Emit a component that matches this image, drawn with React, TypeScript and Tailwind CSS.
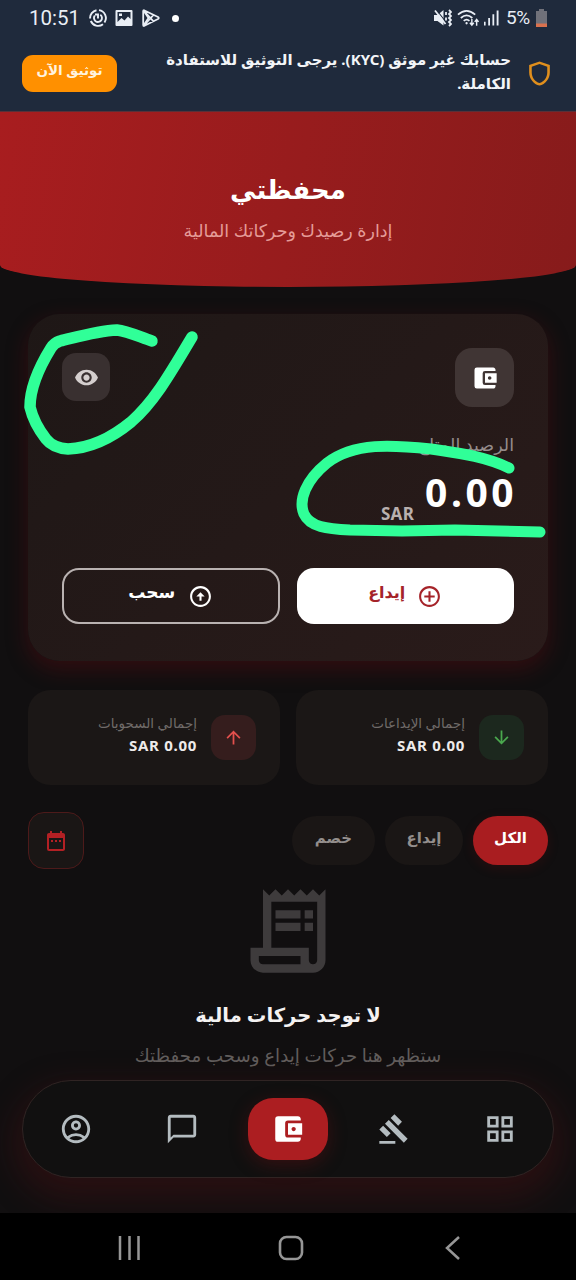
import {
  MdAccountBalanceWallet,
  MdAddCircleOutline,
  MdArrowDownward,
  MdArrowUpward,
  MdChatBubbleOutline,
  MdDateRange,
  MdGavel,
  MdGridView,
  MdOutlineAccountCircle,
  MdOutlineArrowCircleUp,
  MdOutlineReceiptLong,
  MdOutlineShield,
  MdVisibility,
} from "react-icons/md";

const StatusBar = () => (
  <div dir="ltr" className="flex h-9 items-center justify-between pl-[29px] pr-[29px] text-[#e9eef5] font-[Roboto,sans-serif]">
    <div className="flex items-center">
      <span className="w-[52px] text-[20.500px] leading-9">10:51</span>
      <svg className="ml-2 h-[18px] w-[18px]" viewBox="0 0 18 18" fill="none" stroke="currentColor" strokeWidth="1.900">
        <path d="M7.500 1.200A8 8 0 0 0 1.100 9.500M1.800 12A8 8 0 0 0 14 15.200M15.500 13.500A8 8 0 0 0 10 1.100" />
        <path d="M5.800 6.500a4 4 0 1 0 5.500-.8M9 9.500V5.500H6" />
      </svg>
      <svg className="ml-2 h-[18px] w-[18px]" viewBox="0 0 18 18">
        <path fill="currentColor" fillRule="evenodd" d="M1.500 1h15q1 0 1 1v14q0 1-1 1h-15q-1 0-1-1V2q0-1 1-1zM2.500 3v10l4-4 3 2.500 3.500-4 2.500 2.500V3zM4 4.500h3v2.500H4z" />
      </svg>
      <svg className="ml-[9px] h-[18px] w-[18px]" viewBox="0 0 18 18" fill="none" stroke="currentColor" strokeWidth="1.800" strokeLinejoin="round">
        <path d="M2 1.200 16 8q1.500 1 0 2L2 17q-.8 0-.8-1V2q0-.8.8-.8zM2 2l9.500 10.300M2 16.300 11.500 6" />
        <path d="M1.500 1.500 6.500 9l-5 7.500" />
      </svg>
      <span className="ml-3 h-[7px] w-[7px] rounded-full bg-white" />
    </div>
    <div className="flex items-center">
      <svg className="h-[18px] w-[18px]" viewBox="0 0 18 18" fill="none" stroke="currentColor" strokeWidth="1.800">
        <path fill="currentColor" stroke="none" d="M0 6h3.500l6-5v15.500l-6-4.500H0z" />
        <path stroke="#1f2a3c" strokeWidth="1.200" d="M2.500 1l9 11.500" />
        <path d="M1 1.500 11.500 15M15 1l2 2-2 2 2 2-2 2 2 2-2 2 2 2-2 2M12 3v3M12 8.500v3" />
      </svg>
      <svg className="ml-[5px] h-5 w-[23px]" viewBox="0 0 24 20" fill="none" stroke="currentColor" strokeWidth="1.800">
        <path d="M1 6.500q9-8 18 0M4 10q6-5.500 12 0M7 13q3-2.800 6 0" />
        <circle cx="10" cy="15.500" r="1.200" fill="currentColor" stroke="none" />
        <path strokeWidth="1.500" d="M15.500 11v6M13.500 15l2 2.500 2-2.500M20.500 18v-6M18.500 14l2-2.500 2 2.500" />
      </svg>
      <svg className="ml-1 h-4 w-[15px]" viewBox="0 0 16 16" fill="currentColor">
        <path d="M0 12h1.700v4H0zM4.500 8h1.900v8H4.500zM9 4h1.900v12H9zM13.500 0h2v16h-2z" />
      </svg>
      <span className="ml-[7px] w-[27px] text-[19px] leading-9 tracking-[-0.5px]">5%</span>
      <svg className="ml-[3px] h-[18px] w-[11px]" viewBox="0 0 11 18">
        <path fill="#70717a" d="M3 0h5v2h3v13H0V2h3z" />
        <path fill="#d9714e" d="M0 14.500h11V18H0z" />
      </svg>
    </div>
  </div>
);

const KycBanner = () => (
  <div className="flex h-[76px] border-b border-[#5a3038] pr-[21px] pl-[22px]">
    <MdOutlineShield className="mt-[23px] h-[29px] w-[31px] shrink-0 text-[#e08f1d]" preserveAspectRatio="none" />
    <p className="mr-[13px] mt-[11px] w-[350px] text-[15px] font-bold leading-6 text-[#f2f5f8] whitespace-nowrap">
      حسابك غير موثق (KYC). يرجى التوثيق للاستفادة
      <br />
      الكاملة.
    </p>
    <button className="mr-auto mt-[19px] h-[37px] w-[95px] shrink-0 rounded-[11px] bg-[#ff9000] pb-[6px] text-[13.500px] font-bold text-[#fff3df]">
      توثيق الآن
    </button>
  </div>
);

const WalletHeader = () => (
  <header className="flex h-[175px] flex-col items-center rounded-b-[50%_22px] bg-linear-[100deg] from-[#a81d1f] to-[#871b1b] pt-[57px]">
    <h1 className="text-[26px] font-bold leading-10 text-white">محفظتي</h1>
    <p className="mt-[7px] text-[17.500px] leading-7 text-[#e59b98]">إدارة رصيدك وحركاتك المالية</p>
  </header>
);

const BalanceCard = () => (
  <section className="relative mx-7 mt-[27px] h-[347px] rounded-[32px] bg-linear-[135deg] from-[#1e1716] to-[#2a1b1a] px-[34px] pt-[34px] shadow-[0_8px_20px_2px_rgba(100,12,16,0.35)]">
    <div className="flex justify-between">
      <div className="flex h-[59px] w-[59px] items-center justify-center rounded-[17px] bg-[#403534]">
        <MdAccountBalanceWallet className="h-7 w-7 text-white" />
      </div>
      <button className="mt-[5px] flex h-12 w-12 items-center justify-center rounded-[14px] bg-[#393030]">
        <MdVisibility className="h-[25px] w-[25px] text-[#d5cfce]" />
      </button>
    </div>
    <p className="mt-[21px] h-8 text-[17.500px] leading-8 text-[#958c8b]">الرصيد المتاح</p>
    <div dir="ltr" className="flex h-[62px] items-end justify-end gap-[11px] font-['Noto_Sans',sans-serif] font-bold">
      <span className="mb-[-4px] text-[17px] leading-6 tracking-[0.3px] text-[#b9b0af]">SAR</span>
      <span className="mr-[-3px] text-[39px] leading-[60px] tracking-[3.500px] text-white">0.00</span>
    </div>
    <div className="mt-[46px] grid grid-cols-2 gap-[17px]">
      <button className="flex h-14 items-center justify-center gap-3 rounded-[17px] bg-white text-[#a52329]">
        <MdAddCircleOutline className="h-[25px] w-[25px]" />
        <span className="mb-2 text-[16px] font-bold">إيداع</span>
      </button>
      <button className="flex h-14 items-center justify-center gap-[13px] rounded-[17px] border-2 border-[#b9b2b1] text-white">
        <MdOutlineArrowCircleUp className="h-[25px] w-[25px]" />
        <span className="mb-2 text-[17px] font-bold">سحب</span>
      </button>
    </div>

    {/* Highlighter marks drawn over the card */}
    <svg className="pointer-events-none absolute left-[-28px] top-0 h-[347px] w-[576px]" viewBox="0 314 576 347" fill="none" stroke="#30ff98" strokeLinecap="round" strokeLinejoin="round">
      <path strokeWidth="11.500" d="M152 341C142 338 128 331 117 330C97 331 77 337 60 341Q54 343 51 348C38 369 30 388 30 407C33 420 39 430 46 439Q53 448 68 449C93 448 114 436 131 422C154 402 170 374 192 337" />
      <path strokeWidth="11" d="M509 468C484 456 457 453 431 449C393 445 354 442 327 463C306 480 298 500 304 514C310 527 327 529 350 530L402 531L455 530L540 532" />
    </svg>
  </section>
);

const stats = [
  { label: "إجمالي الإيداعات", icon: MdArrowDownward, tone: "bg-[#1c281e] text-[#4aa84e]" },
  { label: "إجمالي السحوبات", icon: MdArrowUpward, tone: "bg-[#351d1d] text-[#e4504d]" },
];

const Stats = () => (
  <section className="relative mx-7 mt-[29px] grid grid-cols-2 gap-4">
    {stats.map(({ label, icon: Icon, tone }) => (
      <div key={label} className="flex h-[95px] rounded-[22px] bg-[#1b1716] pr-6 pt-[25px]">
        <div className={`flex h-[45px] w-[45px] items-center justify-center rounded-[14px] ${tone}`}>
          <Icon className="h-[21px] w-[21px]" />
        </div>
        <div className="mr-[14px]">
          <p className="mt-[-2px] h-5 text-[13.500px] leading-5 text-[#706b69] whitespace-nowrap">{label}</p>
          <p dir="ltr" className="text-right font-['Noto_Sans',sans-serif] text-[15px] font-bold leading-6 tracking-[0.7px] text-[#eeebea]">SAR 0.00</p>
        </div>
      </div>
    ))}
  </section>
);

const Filters = () => (
  <section className="mx-7 mt-[27px] flex h-[57px] items-center text-[15px] font-bold">
    <button className="h-[49px] w-[75px] rounded-[25px] bg-[#a91d20] pb-[6px] text-white shadow-[0_3px_12px_rgba(120,15,15,0.2)]">الكل</button>
    <button className="mr-[10px] h-[49px] w-[78px] rounded-[25px] bg-[#1a1615] pb-[6px] text-[#938e8c]">إيداع</button>
    <button className="mr-[10px] h-[49px] w-[83px] rounded-[25px] bg-[#1a1615] pb-[6px] text-[#938e8c]">خصم</button>
    <button className="mr-auto flex h-[57px] w-14 items-center justify-center rounded-2xl border border-[#4d1a1a] bg-[#1a1615]">
      <MdDateRange className="h-6 w-6 text-[#b32024]" />
    </button>
  </section>
);

const EmptyState = () => (
  <section className="flex h-[211px] flex-col items-center pt-[12px]">
    <MdOutlineReceiptLong className="h-[100px] w-[100px] text-[#3e3b3c]" />
    <h2 className="mt-[16px] text-[19.500px] font-bold leading-9 text-[#f4f2f2]">لا توجد حركات مالية</h2>
    <p className="mt-[6px] text-[18.200px] leading-8 text-[#625e5d]">ستظهر هنا حركات إيداع وسحب محفظتك</p>
  </section>
);

const BottomNav = () => (
  <nav className="mx-[22px] grid h-[98px] shrink-0 grid-cols-5 place-items-center rounded-full border border-[#302423] bg-[#111010] text-[#b4bcc0] shadow-[0_14px_32px_8px_rgba(85,18,20,0.34)]">
    <MdGridView className="h-[34px] w-[34px]" />
    <MdGavel className="h-8 w-8" />
    <div className="flex h-[62px] w-20 items-center justify-center rounded-[25px] bg-[#ac1e21] shadow-[0_5px_18px_rgba(120,18,20,0.35)]">
      <MdAccountBalanceWallet className="h-[34px] w-[34px] text-white" />
    </div>
    <MdChatBubbleOutline className="h-[34px] w-[34px]" />
    <MdOutlineAccountCircle className="h-[34px] w-[34px]" />
  </nav>
);

const SystemNav = () => (
  <div dir="ltr" className="relative mt-auto flex h-[67px] items-center justify-between bg-black pt-[2px] pl-[117px] pr-[116px] text-[#969696]">
    <svg className="h-6 w-6" viewBox="0 0 24 24" stroke="currentColor" strokeWidth="2.500">
      <path d="M3 0v24M12.500 0v24M21.500 0v24" />
    </svg>
    <svg className="mr-[5px] h-[26px] w-[26px]" viewBox="0 0 26 26" fill="none" stroke="currentColor" strokeWidth="2.600">
      <rect x="2" y="2" width="22" height="22" rx="6.500" />
    </svg>
    <svg className="h-6 w-[15px]" viewBox="0 0 15 24" fill="none" stroke="currentColor" strokeWidth="2.500">
      <path d="M14 1 2 12l12 11" />
    </svg>
  </div>
);

const App = () => {
  return (
    <div dir="rtl" className="flex h-[1280px] w-[576px] flex-col overflow-hidden bg-[#110f10] font-['Noto_Sans','DejaVu_Sans',sans-serif]">
      <div className="bg-[#1f2a3c]">
        <StatusBar />
        <KycBanner />
      </div>
      <WalletHeader />
      <BalanceCard />
      <Stats />
      <Filters />
      <EmptyState />
      <BottomNav />
      <SystemNav />
    </div>
  );
};

export default App;
